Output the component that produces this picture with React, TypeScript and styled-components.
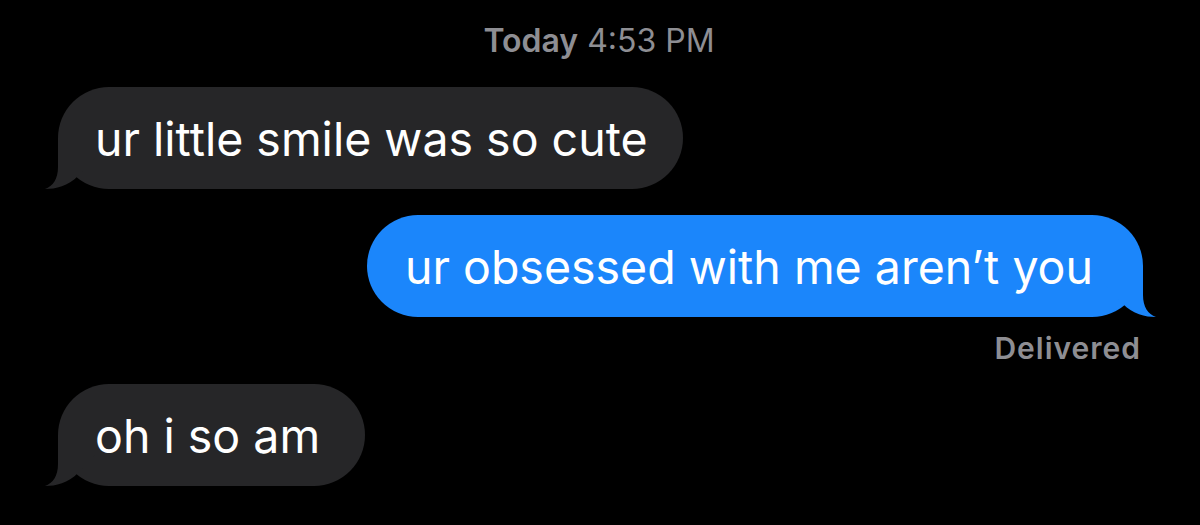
import React from "react";
import styled, { createGlobalStyle } from "styled-components";

const Global = createGlobalStyle`
  html, body {
    margin: 0;
    padding: 0;
    background: #000;
  }
  body {
    font-family: Inter, "Liberation Sans", Arial, sans-serif;
    -webkit-font-smoothing: antialiased;
  }
`;

const Screen = styled.div`
  width: 1200px;
  height: 525px;
  background: #000;
  box-sizing: border-box;
  padding: 22px 57px 0 58px;
  display: flex;
  flex-direction: column;
  overflow: hidden;
`;

const Stamp = styled.div`
  align-self: center;
  font-size: 32px;
  line-height: 38px;
  color: #8e8e93;
  font-weight: 400;
  margin-bottom: 27px;
  margin-right: 3px;
  b {
    font-weight: 600;
  }
`;

const Row = styled.div<{ $out?: boolean; $gap?: number }>`
  display: flex;
  justify-content: ${(p) => (p.$out ? "flex-end" : "flex-start")};
  margin-bottom: ${(p) => p.$gap ?? 0}px;
`;

const Bubble = styled.div<{ $out?: boolean; $padL: number; $padR: number }>`
  position: relative;
  background: ${(p) => (p.$out ? "#1b86fb" : "#262628")};
  color: #fff;
  border-radius: 51px;
  padding: 24px ${(p) => p.$padR}px 22px ${(p) => p.$padL}px;
  font-size: 46.5px;
  line-height: 56px;
  font-weight: 400;
  white-space: nowrap;
`;

const Label = styled.span`
  position: relative;
  z-index: 1;
`;

const TailSvg = styled.svg<{ $out?: boolean }>`
  position: absolute;
  bottom: 0;
  width: 70px;
  height: 60px;
  ${(p) => (p.$out ? "right: -14px;" : "left: -14px; transform: scaleX(-1);")}
`;

const Delivered = styled.div`
  align-self: flex-end;
  margin-top: 14px;
  margin-right: 2px;
  margin-bottom: 19px;
  font-size: 30px;
  line-height: 34px;
  letter-spacing: 1px;
  font-weight: 600;
  color: #8e8e93;
`;

function Tail({ out, color }: { out?: boolean; color: string }) {
  return (
    <TailSvg $out={out} viewBox="0 0 70 60" aria-hidden="true">
      <path
        d="M56 9 L56 38 C56 50 61 57 69 60 C58 60 46 57 36 47 L20 30 L5 9 Z"
        fill={color}
      />
    </TailSvg>
  );
}

function Message({
  text,
  out,
  gap,
  padL,
  padR,
}: {
  text: string;
  out?: boolean;
  gap?: number;
  padL: number;
  padR: number;
}) {
  const color = out ? "#1b86fb" : "#262628";
  return (
    <Row $out={out} $gap={gap}>
      <Bubble $out={out} $padL={padL} $padR={padR}>
        <Tail out={out} color={color} />
        <Label>{text}</Label>
      </Bubble>
    </Row>
  );
}

export default function App() {
  return (
    <>
      <Global />
      <Screen>
        <Stamp>
          <b>Today</b> 4:53 PM
        </Stamp>
        <Message text="ur little smile was so cute" gap={26} padL={37} padR={35} />
        <Message text="ur obsessed with me aren’t you" out padL={38} padR={50} />
        <Delivered>Delivered</Delivered>
        <Message text="oh i so am" padL={37} padR={45} />
      </Screen>
    </>
  );
}
